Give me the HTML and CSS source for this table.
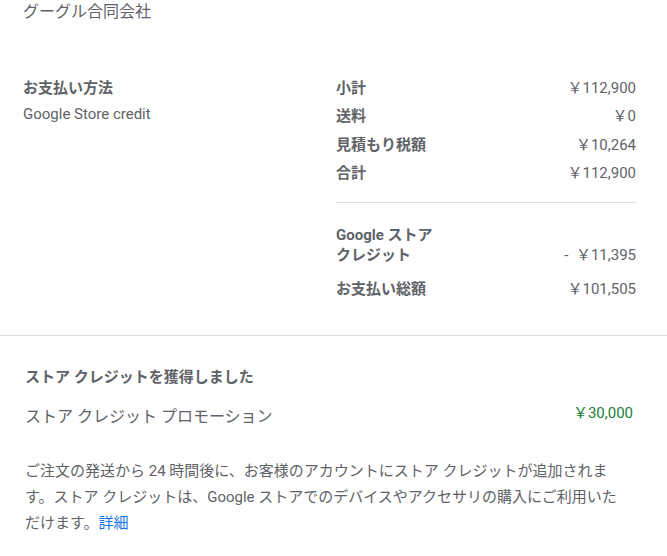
FILE: index.html
```html
<!DOCTYPE html>
<html lang="ja">
<head>
<meta charset="utf-8">
<link rel="stylesheet" href="styles.css">
</head>
<body>
<div class="company">グーグル合同会社</div>
<section class="payment">
  <div class="method">
    <div class="method-title">お支払い方法</div>
    <div class="method-value">Google Store credit</div>
  </div>
  <div class="summary">
    <div class="row"><span class="label">小計</span><span class="amount">￥112,900</span></div>
    <div class="row"><span class="label">送料</span><span class="amount">￥0</span></div>
    <div class="row"><span class="label">見積もり税額</span><span class="amount">￥10,264</span></div>
    <div class="row"><span class="label">合計</span><span class="amount">￥112,900</span></div>
    <div class="divider"></div>
    <div class="row credit"><span class="label">Google ストア<br>クレジット</span><span class="amount">-&nbsp; ￥11,395</span></div>
    <div class="row total"><span class="label">お支払い総額</span><span class="amount">￥101,505</span></div>
  </div>
</section>
<section class="earned">
  <div class="earned-title">ストア クレジットを獲得しました</div>
  <div class="promo"><span class="promo-name">ストア クレジット プロモーション</span><span class="promo-amount">￥30,000</span></div>
  <p class="note">ご注文の発送から 24 時間後に、お客様のアカウントにストア クレジットが追加されます。ストア クレジットは、Google ストアでのデバイスやアクセサリの購入にご利用いただけます。<a href="#" class="more">詳細</a></p>
</section>
</body>
</html>
```
FILE: styles.css
```css
* { box-sizing: border-box; }
body {
  margin: 0;
  font-family: Roboto, "Noto Sans CJK JP", sans-serif;
  color: #5f6368;
  background: #fff;
}
.company {
  padding-left: 23px;
  font-size: 16px;
  line-height: 24px;
}
.payment {
  display: flex;
  padding: 50px 31px 31px 23px;
  border-bottom: 1px solid #dadce0;
}
.method {
  width: 313px;
  flex: none;
}
.method-title {
  font-size: 15px;
  font-weight: 700;
  line-height: 28px;
}
.method-value {
  font-size: 15px;
  line-height: 24px;
}
.summary {
  flex: 1;
}
.row {
  display: flex;
  justify-content: space-between;
  align-items: flex-end;
  font-size: 15px;
  line-height: 28.33px;
}
.label { font-weight: 700; }
.divider {
  height: 1px;
  background: #dadce0;
  margin: 15px 0 23px;
}
.row.credit { line-height: 19.5px; }
.row.total { margin-top: 10px; }
.earned {
  padding: 27px 34px 0 25px;
}
.earned-title {
  font-size: 15px;
  font-weight: 700;
  line-height: 28px;
}
.promo {
  display: flex;
  justify-content: space-between;
  align-items: flex-start;
  margin-top: 14px;
}
.promo-name {
  font-size: 16px;
  line-height: 24px;
}
.promo-amount {
  font-size: 15px;
  line-height: 18px;
  margin-top: -1px;
  color: #188038;
}
.note {
  margin: 29px 0 0;
  max-width: 598px;
  font-size: 15px;
  line-height: 26px;
}
.more {
  color: #1a73e8;
  text-decoration: none;
}
```
